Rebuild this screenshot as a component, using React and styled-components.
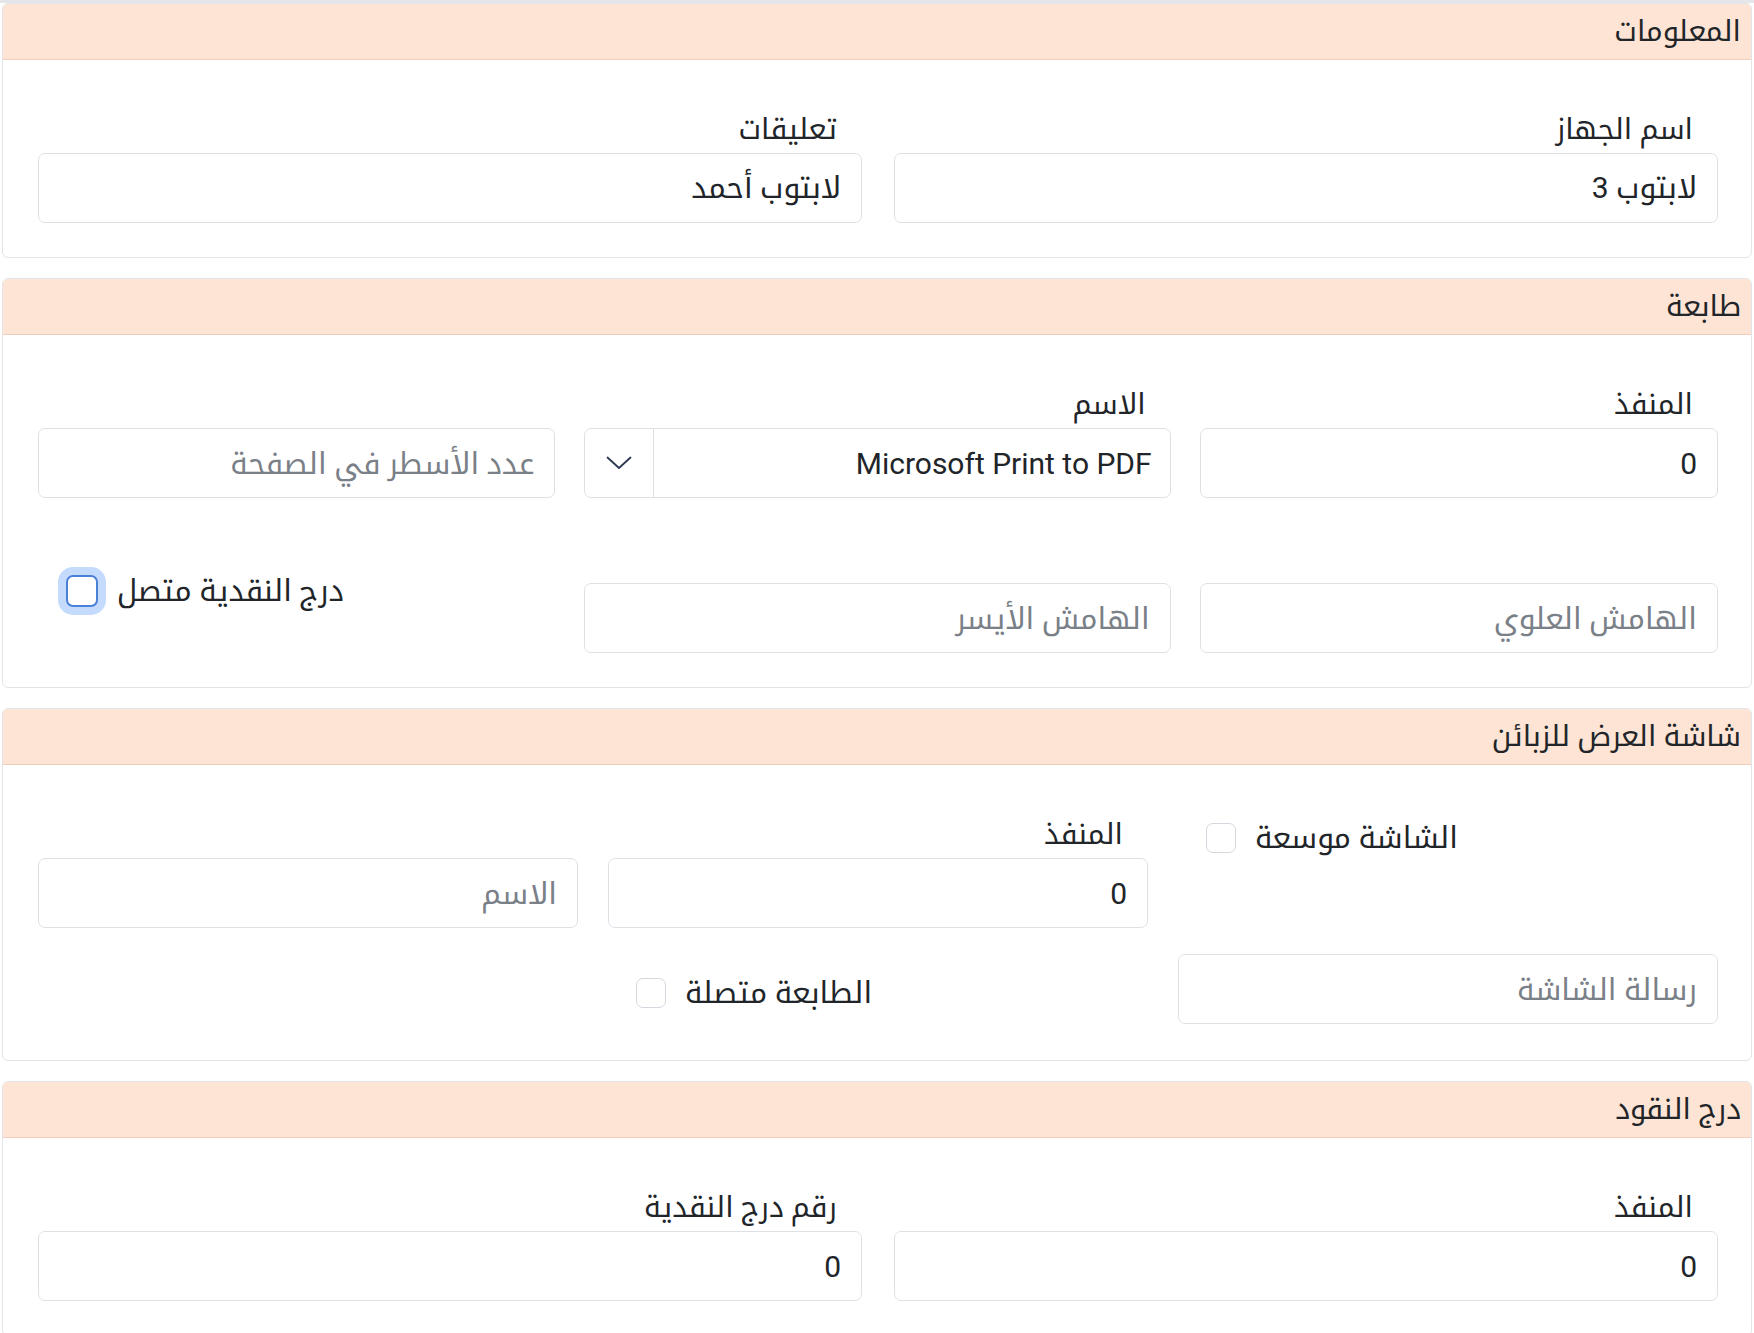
import React from 'react'
import styled, { createGlobalStyle } from 'styled-components'

const GlobalStyle = createGlobalStyle`
    html, body {
        margin: 0;
        padding: 0;
        background: #ffffff;
    }
    body {
        font-family: Roboto, "Noto Kufi Arabic", "Noto Sans Arabic", "DejaVu Sans", sans-serif;
        color: #212529;
    }
    * {
        box-sizing: border-box;
    }
`

const Page = styled.div`
    direction: rtl;
    border-top: 3px solid #e4e6ea;
    padding: 0 2px;
    display: flex;
    flex-direction: column;
    gap: 20px;
`

const Panel = styled.section`
    border: 1px solid #e1e4e8;
    border-radius: 6px;
    overflow: hidden;
    background: #ffffff;
`

const PanelHeader = styled.div`
    height: 56px;
    background: #fee4d4;
    border-bottom: 1px solid #f0cdbd;
    display: flex;
    align-items: center;
    padding: 0 10px;
    font-size: 29px;
    color: #212529;
`

const PanelBody = styled.div`
    padding: ${(p) => p.$top || 52}px 33px ${(p) => p.$bottom || 34}px 35px;
`

const Row = styled.div`
    display: grid;
    grid-template-columns: ${(p) => p.$cols};
    column-gap: ${(p) => p.$gap || 30}px;
    align-items: ${(p) => p.$align || 'start'};
    margin-top: ${(p) => p.$top || 0}px;
`

const Field = styled.div`
    display: flex;
    flex-direction: column;
    padding-top: ${(p) => p.$pad || 0}px;
`

const Label = styled.label`
    font-size: 29px;
    line-height: 34px;
    padding: 0 25px;
    margin-bottom: 7px;
    color: #212529;
`

const Input = styled.input`
    height: 70px;
    width: 100%;
    border: 1px solid #dde1e6;
    border-radius: 7px;
    padding: 0 20px;
    font-family: inherit;
    font-size: 30px;
    color: #212529;
    background: #ffffff;
    outline: none;
    direction: rtl;

    &::placeholder {
        color: #7a8087;
    }
`

const Select = styled.div`
    height: 70px;
    display: flex;
    border: 1px solid #dde1e6;
    border-radius: 7px;
    overflow: hidden;
`

const SelectValue = styled.div`
    flex: 1;
    display: flex;
    align-items: center;
    padding: 0 18px;
    font-size: 30px;
    direction: ltr;
    justify-content: flex-end;
`

const Chevron = styled.div`
    width: 69px;
    border-right: 1px solid #dde1e6;
    display: flex;
    align-items: center;
    justify-content: center;
    color: #2c3850;
`

const CheckItem = styled.label`
    direction: ltr;
    display: flex;
    align-items: center;
    gap: 19px;
    padding-left: 28px;
    margin-top: ${(p) => p.$top || 0}px;
    font-size: 30px;
    line-height: 34px;
    height: 34px;
    color: #212529;
`

const Box = styled.input.attrs({ type: 'checkbox' })`
    appearance: none;
    margin: 0;
    width: ${(p) => (p.$focus ? 32 : 30)}px;
    height: ${(p) => (p.$focus ? 32 : 30)}px;
    border-radius: 7px;
    border: ${(p) => (p.$focus ? '2px solid #4a80d8' : '1px solid #d3d8de')};
    box-shadow: ${(p) => (p.$focus ? '0 0 0 8px #c4dbfd' : 'none')};
    background: #ffffff;
    flex-shrink: 0;
`

const ChevronIcon = () => (
    <svg width="26" height="14" viewBox="0 0 26 14" fill="none">
        <polyline points="1.5,1.5 13,12 24.5,1.5" stroke="currentColor" strokeWidth="1.8" strokeLinejoin="round" strokeLinecap="round" />
    </svg>
)

export default function App() {
    return (
        <>
            <GlobalStyle />
            <Page>
                <Panel>
                    <PanelHeader>المعلومات</PanelHeader>
                    <PanelBody>
                        <Row $cols="1fr 1fr" $gap={32}>
                            <Field>
                                <Label>اسم الجهاز</Label>
                                <Input defaultValue="لابتوب 3" />
                            </Field>
                            <Field>
                                <Label>تعليقات</Label>
                                <Input defaultValue="لابتوب أحمد" />
                            </Field>
                        </Row>
                    </PanelBody>
                </Panel>

                <Panel>
                    <PanelHeader>طابعة</PanelHeader>
                    <PanelBody>
                        <Row $cols="519fr 587fr 518fr" $gap={29} $align="end">
                            <Field>
                                <Label>المنفذ</Label>
                                <Input defaultValue="0" />
                            </Field>
                            <Field>
                                <Label>الاسم</Label>
                                <Select>
                                    <SelectValue>Microsoft Print to PDF</SelectValue>
                                    <Chevron>
                                        <ChevronIcon />
                                    </Chevron>
                                </Select>
                            </Field>
                            <Field>
                                <Input placeholder="عدد الأسطر في الصفحة" />
                            </Field>
                        </Row>
                        <Row $cols="519fr 587fr 518fr" $gap={29} $top={76}>
                            <Field $pad={9}>
                                <Input placeholder="الهامش العلوي" />
                            </Field>
                            <Field $pad={9}>
                                <Input placeholder="الهامش الأيسر" />
                            </Field>
                            <CheckItem>
                                <Box $focus />
                                <span>درج النقدية متصل</span>
                            </CheckItem>
                        </Row>
                    </PanelBody>
                </Panel>

                <Panel>
                    <PanelHeader>شاشة العرض للزبائن</PanelHeader>
                    <PanelBody $top={52} $bottom={36}>
                        <Row $cols="1fr 1fr 1fr" $gap={30}>
                            <CheckItem $top={4}>
                                <Box />
                                <span>الشاشة موسعة</span>
                            </CheckItem>
                            <Field>
                                <Label>المنفذ</Label>
                                <Input defaultValue="0" />
                            </Field>
                            <Field>
                                <Label>&nbsp;</Label>
                                <Input placeholder="الاسم" />
                            </Field>
                        </Row>
                        <Row $cols="1fr 1fr 1fr" $gap={30} $top={26} $align="center">
                            <Field>
                                <Input placeholder="رسالة الشاشة" />
                            </Field>
                            <CheckItem $top={8}>
                                <Box />
                                <span>الطابعة متصلة</span>
                            </CheckItem>
                            <div />
                        </Row>
                    </PanelBody>
                </Panel>

                <Panel>
                    <PanelHeader>درج النقود</PanelHeader>
                    <PanelBody $top={52}>
                        <Row $cols="1fr 1fr" $gap={32}>
                            <Field>
                                <Label>المنفذ</Label>
                                <Input defaultValue="0" />
                            </Field>
                            <Field>
                                <Label>رقم درج النقدية</Label>
                                <Input defaultValue="0" />
                            </Field>
                        </Row>
                    </PanelBody>
                </Panel>
            </Page>
        </>
    )
}
